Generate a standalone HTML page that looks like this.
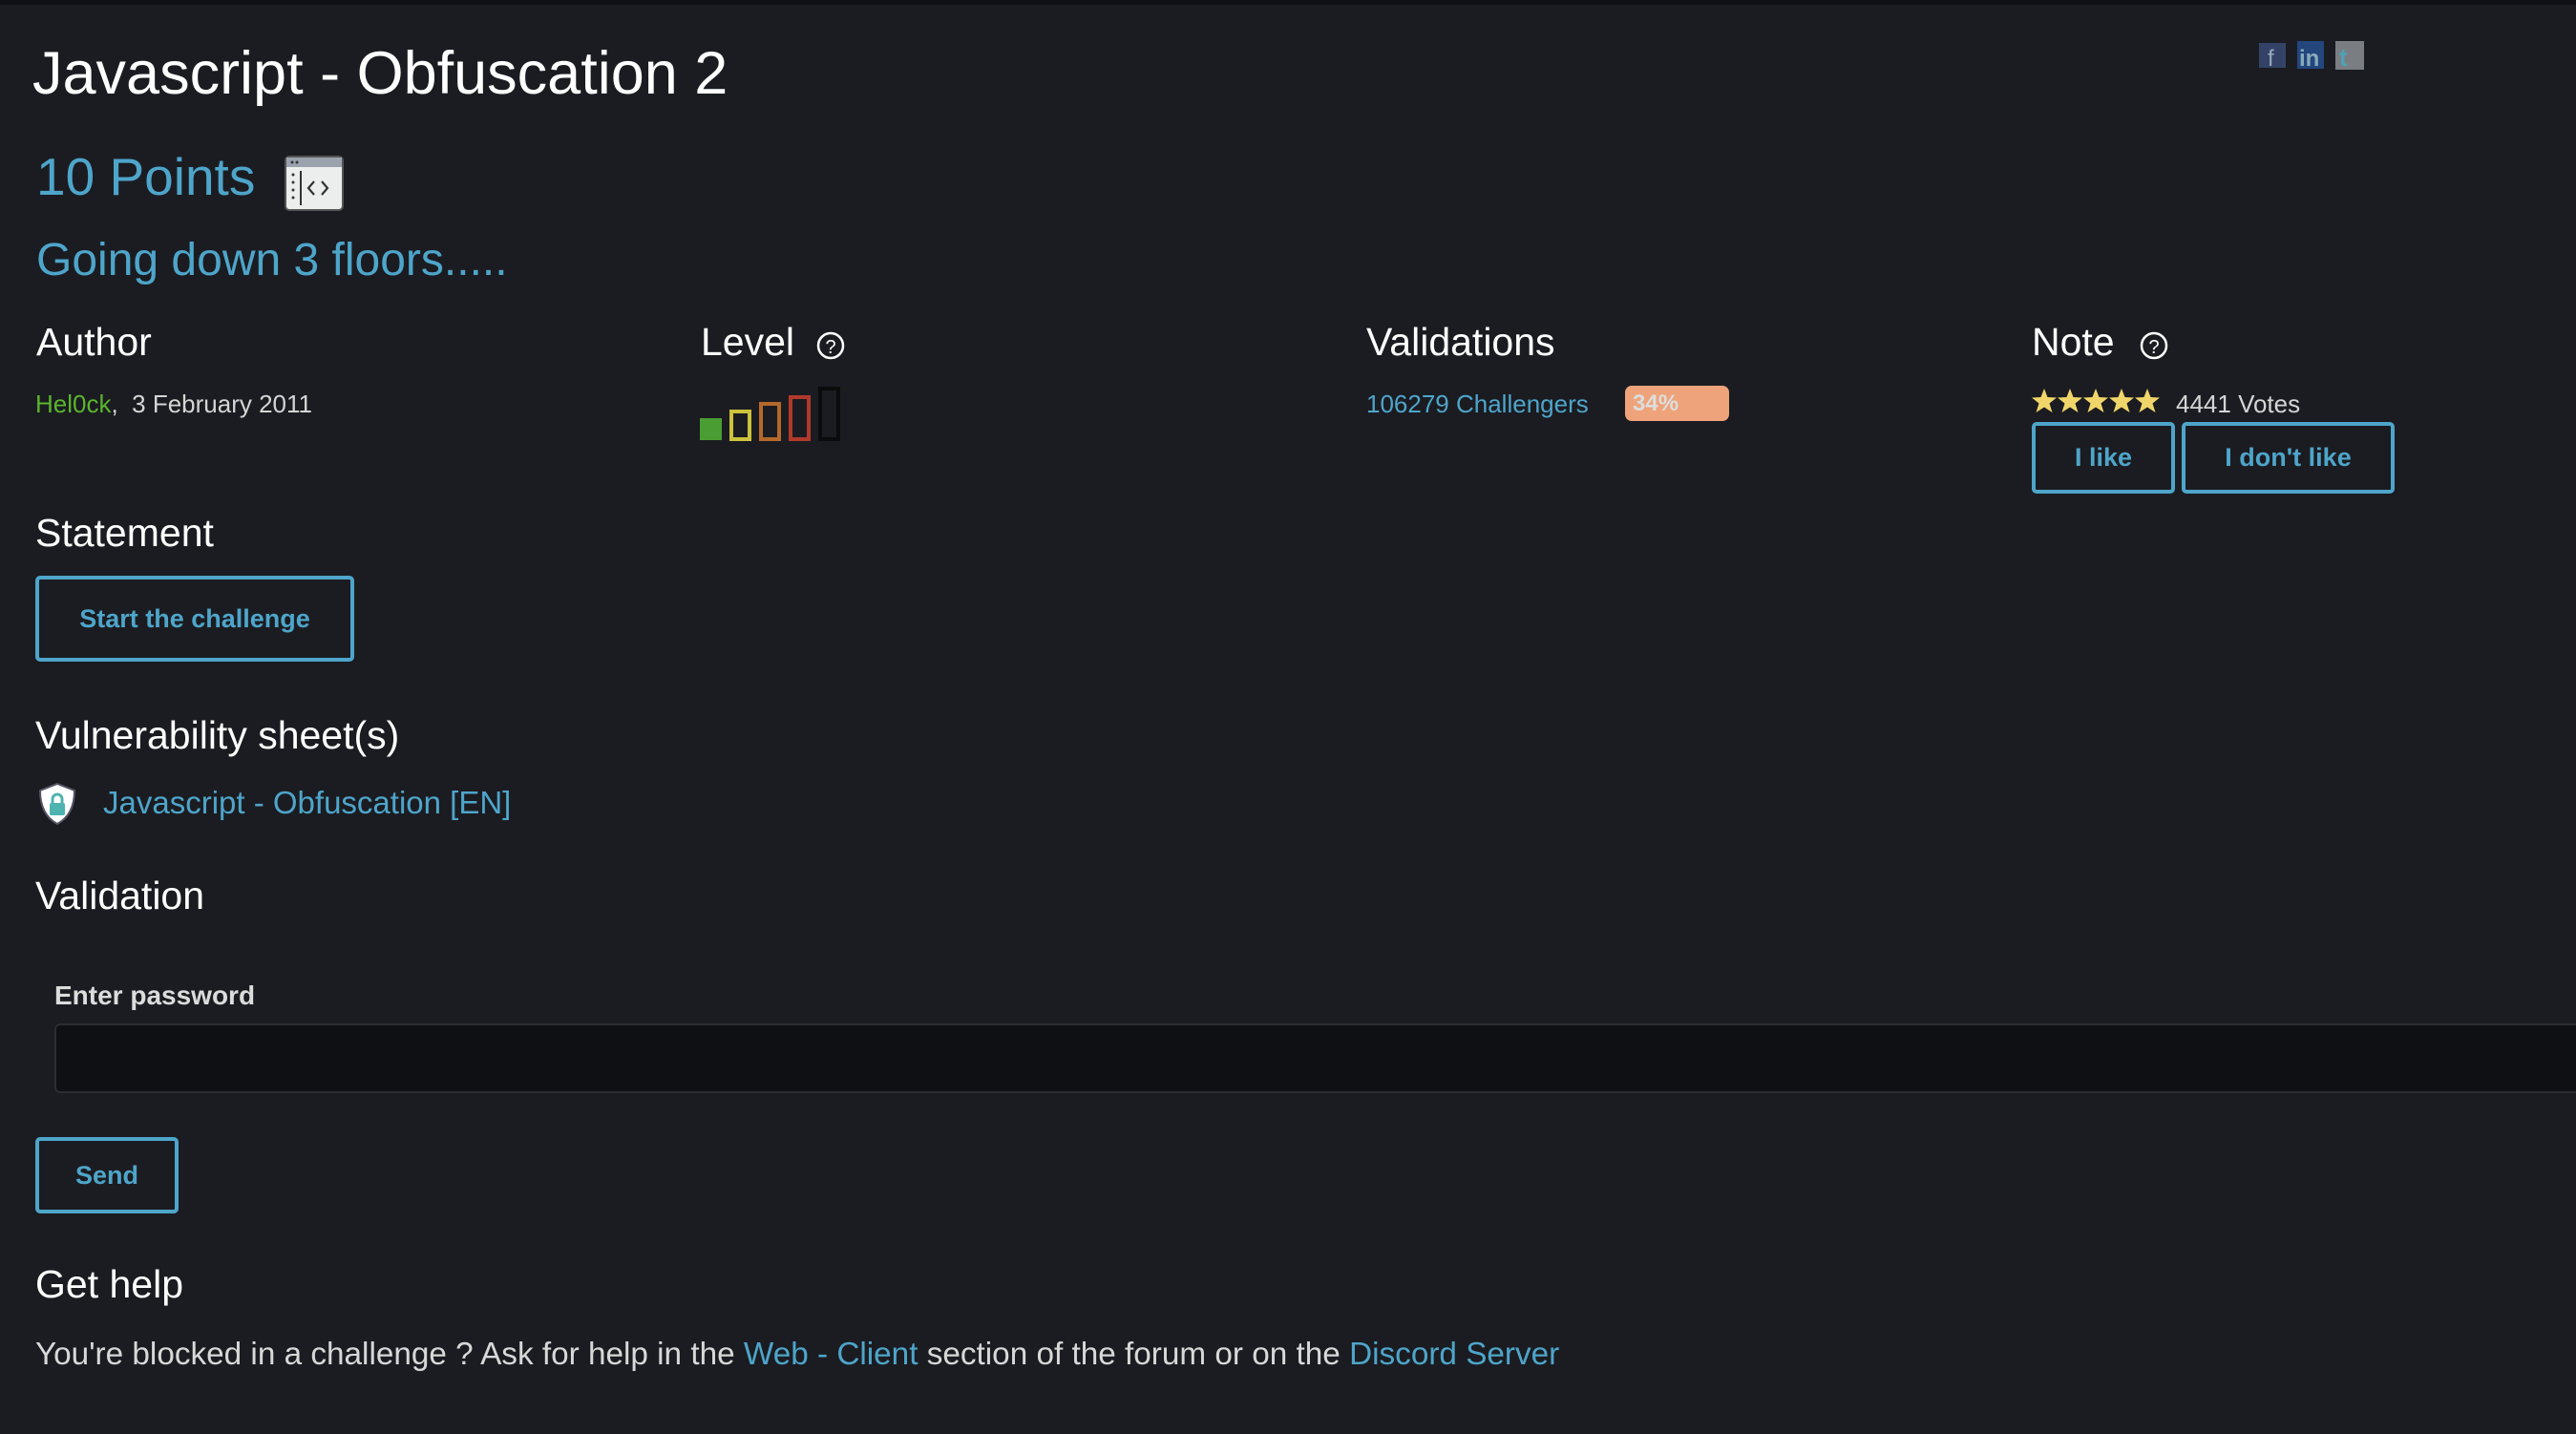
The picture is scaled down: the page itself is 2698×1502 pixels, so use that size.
<!DOCTYPE html>
<html><head><meta charset="utf-8"><style>
*{margin:0;padding:0;box-sizing:border-box}
body{width:2698px;height:1502px;background:#1b1c21;font-family:"Liberation Sans",sans-serif;position:relative;overflow:hidden;color:#fff}
.t{position:absolute;white-space:nowrap;line-height:1}
.blue{color:#4ea5ca}
.h{font-size:41px;color:#fff}
.btn{position:absolute;border:4px solid #4ea5ca;border-radius:5px;color:#4ea5ca;font-weight:bold;display:flex;align-items:center;justify-content:center;font-size:27px}
</style></head><body>
<div style="position:absolute;left:0;top:0;width:2698px;height:5px;background:#0e0f13"></div>
<div class="t" style="left:34px;top:46px;font-size:63px">Javascript - Obfuscation 2</div>
<div class="t blue" style="left:38px;top:158px;font-size:55px">10 Points</div>
<svg style="position:absolute;left:298px;top:163px" width="62" height="58" viewBox="0 0 62 58"><rect x="1" y="1" width="60" height="56" rx="4" fill="#eceeee" stroke="#555" stroke-width="2"/><rect x="2" y="2" width="58" height="10" fill="#9aa3ad"/><circle cx="8" cy="7" r="1.5" fill="#333"/><circle cx="13" cy="7" r="1.5" fill="#333"/><line x1="17" y1="16" x2="17" y2="52" stroke="#333" stroke-width="2"/><g fill="#333"><circle cx="9" cy="20" r="1.5"/><circle cx="9" cy="28" r="1.5"/><circle cx="9" cy="36" r="1.5"/><circle cx="9" cy="44" r="1.5"/></g><path d="M31 27 L25 34 L31 41 M39 27 L45 34 L39 41" stroke="#333" stroke-width="2.2" fill="none"/></svg>
<div class="t blue" style="left:38px;top:249px;font-size:48px">Going down 3 floors.....</div>
<svg style="position:absolute;left:2366px;top:43px" width="112" height="30"><rect x="0" y="2" width="28" height="26" fill="#3a4d7a" opacity=".8"/><text x="9" y="26" fill="#9ab" font-size="24" font-family="Liberation Sans">f</text><rect x="40" y="0" width="28" height="29" fill="#23467d"/><text x="42" y="26" fill="#8ab" font-size="24" font-weight="bold" font-family="Liberation Sans">in</text><rect x="80" y="0" width="30" height="30" fill="#7a7e82"/><text x="84" y="26" fill="#4fa0b5" font-size="26" font-weight="bold" font-family="Liberation Sans">t</text></svg>

<div class="t h" style="left:38px;top:338px">Author</div>
<div class="t h" style="left:734px;top:338px">Level</div>
<div class="t h" style="left:1431px;top:338px">Validations</div>
<div class="t h" style="left:2128px;top:338px">Note</div>
<svg style="position:absolute;left:854px;top:346px" width="32" height="32"><circle cx="16" cy="16" r="13" fill="none" stroke="#fff" stroke-width="2.5"/><text x="16" y="24" text-anchor="middle" fill="#fff" font-size="20" font-family="Liberation Sans">?</text></svg>
<svg style="position:absolute;left:2240px;top:346px" width="32" height="32"><circle cx="16" cy="16" r="13" fill="none" stroke="#fff" stroke-width="2.5"/><text x="16" y="24" text-anchor="middle" fill="#fff" font-size="20" font-family="Liberation Sans">?</text></svg>

<div class="t" style="left:37px;top:410px;font-size:26px;color:#d5d5d5"><span style="color:#5ab52d">Hel0ck</span>,&nbsp; 3 February 2011</div>
<svg style="position:absolute;left:733px;top:404px" width="150" height="58"><rect x="0" y="34" width="23" height="23" fill="#4a9d32"/><rect x="33" y="27" width="19" height="29" fill="none" stroke="#cdc23c" stroke-width="4"/><rect x="64" y="19" width="19" height="37" fill="none" stroke="#b4692b" stroke-width="4"/><rect x="95" y="12" width="19" height="44" fill="none" stroke="#b1392a" stroke-width="4"/><rect x="126" y="3" width="19" height="53" fill="none" stroke="#0b0b0c" stroke-width="4"/></svg>
<div class="t blue" style="left:1431px;top:410px;font-size:26px">106279 Challengers</div>
<div style="position:absolute;left:1702px;top:404px;width:109px;height:37px;border-radius:7px;background:#eea37a;color:#ddd;font-weight:bold;font-size:24px;line-height:37px;padding-left:8px">34%</div>
<svg style="position:absolute;left:2127px;top:406px" width="140" height="30" viewBox="0 0 140 30"><g fill="#f0d66a"><path id="s" d="M14 1 L17.5 10 L27 10.5 L19.5 16.5 L22.5 26 L14 20.5 L5.5 26 L8.5 16.5 L1 10.5 L10.5 10 Z"/><use href="#s" x="27"/><use href="#s" x="54"/><use href="#s" x="81"/><use href="#s" x="108"/></g></svg>
<div class="t" style="left:2279px;top:410px;font-size:26px;color:#d5d5d5">4441 Votes</div>
<div class="btn" style="left:2128px;top:442px;width:150px;height:75px">I like</div>
<div class="btn" style="left:2285px;top:442px;width:223px;height:75px">I don't like</div>

<div class="t h" style="left:37px;top:538px">Statement</div>
<div class="btn" style="left:37px;top:603px;width:334px;height:90px">Start the challenge</div>
<div class="t h" style="left:37px;top:750px">Vulnerability sheet(s)</div>
<svg style="position:absolute;left:38px;top:819px" width="44" height="46" viewBox="0 0 44 46"><path d="M22 2 L40 9 C40 27 33 38 22 44 C11 38 4 27 4 9 Z" fill="#fff" stroke="#556" stroke-width="2"/><rect x="14" y="22" width="16" height="13" rx="2" fill="#4fb3b0"/><path d="M17 22 V18 A5 5 0 0 1 27 18 V22" fill="none" stroke="#4fb3b0" stroke-width="3"/></svg>
<div class="t blue" style="left:108px;top:824px;font-size:33px">Javascript - Obfuscation [EN]</div>
<div class="t h" style="left:37px;top:918px">Validation</div>
<div class="t" style="left:57px;top:1029px;font-size:28px;font-weight:bold;color:#dcdcdc">Enter password</div>
<div style="position:absolute;left:57px;top:1072px;width:2700px;height:73px;background:#0f1013;border:2px solid #2c2d33;border-radius:6px"></div>
<div class="btn" style="left:37px;top:1191px;width:150px;height:80px">Send</div>
<div class="t h" style="left:37px;top:1325px">Get help</div>
<div class="t" style="left:37px;top:1402px;font-size:33.3px;color:#d8d8d8">You're blocked in a challenge ? Ask for help in the <span class="blue">Web - Client</span> section of the forum or on the <span class="blue">Discord Server</span></div>
</body></html>
